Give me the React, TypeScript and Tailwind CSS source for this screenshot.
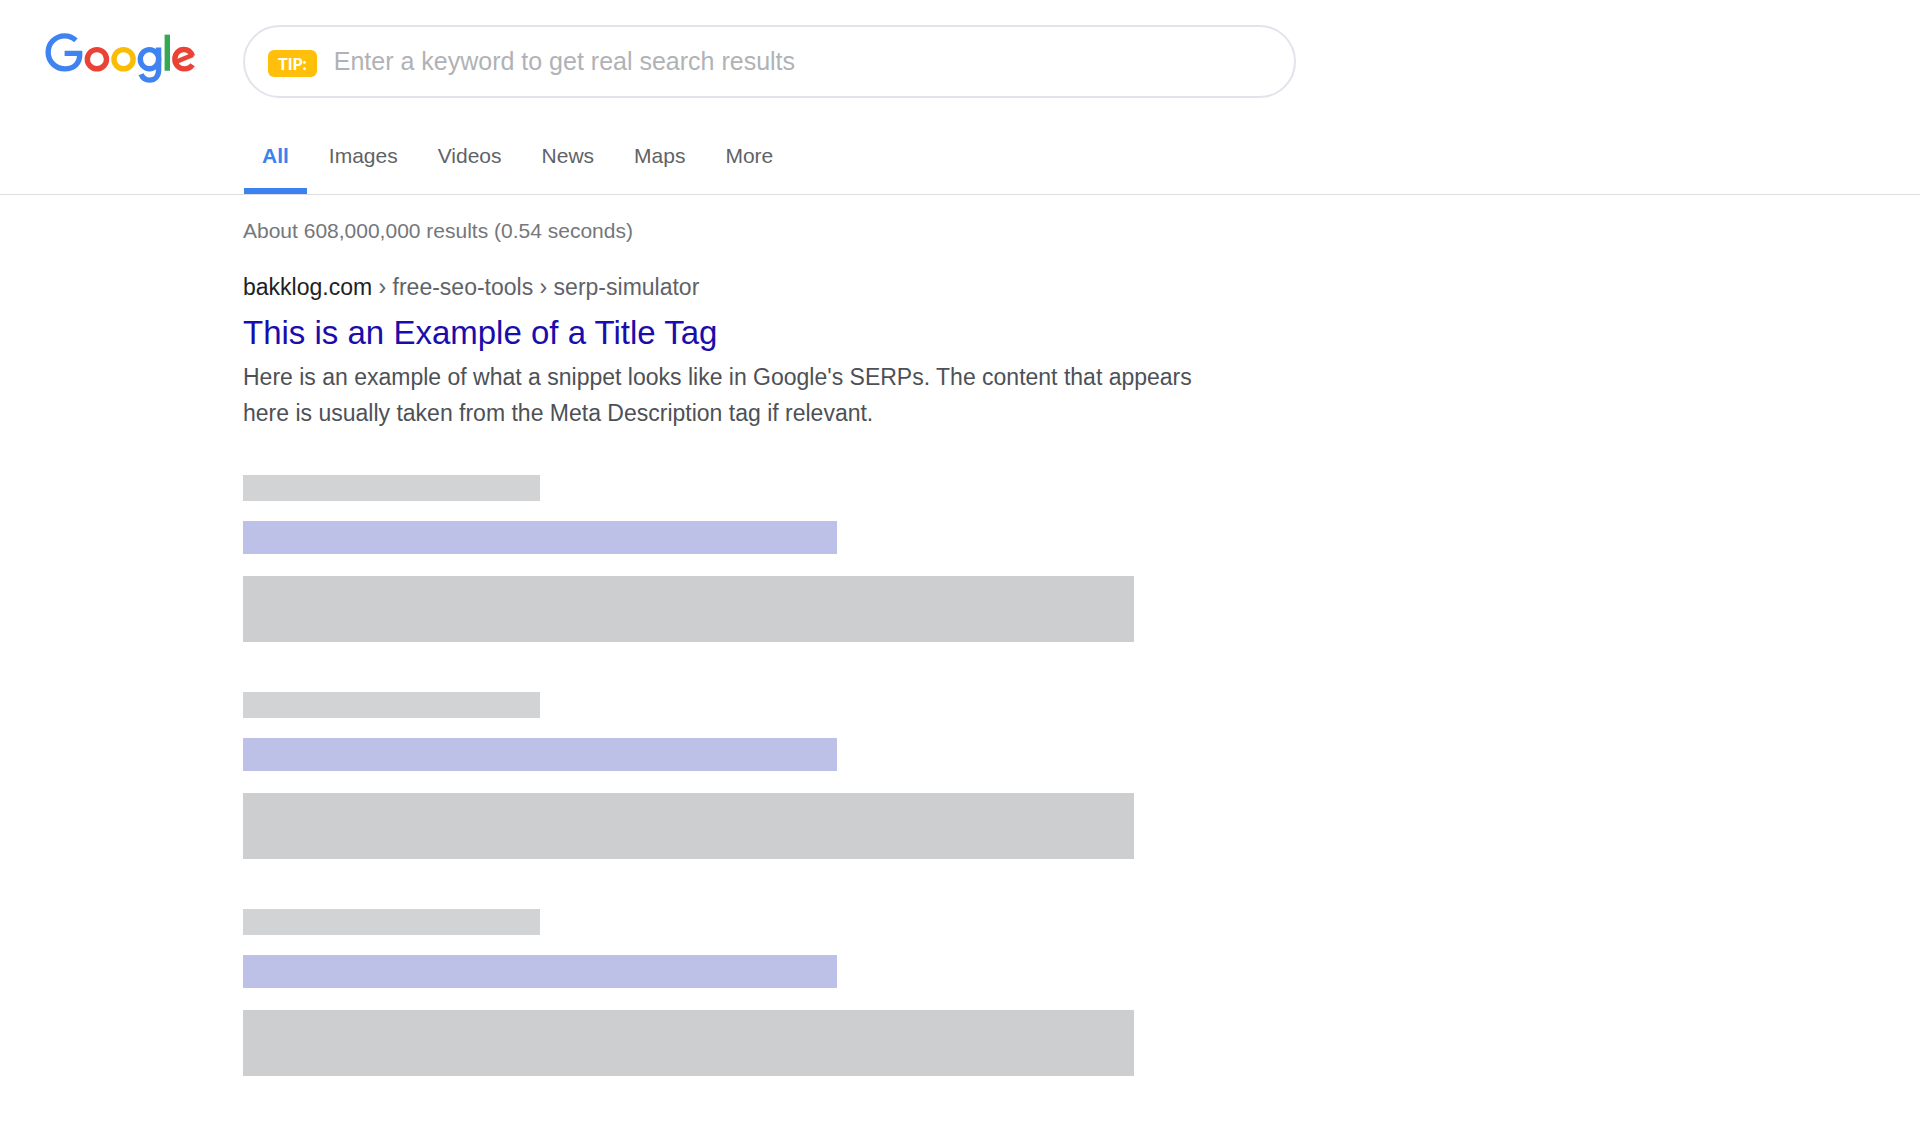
const tabs = ["All", "Images", "Videos", "News", "Maps", "More"];
const placeholders = [1, 2, 3];

function GoogleLogo() {
  return (
    <svg viewBox="0 0 272 92" className="w-[151px]" role="img" aria-label="Google" fill="none" strokeWidth="9.7">
      <path
        stroke="#3f83f0"
        d="M55.6 13.3C49.9 8 43 5.2 35.3 5.2A29.7 29.7 0 0 0 35.3 64.6C52.5 64.6 63.4 54.5 62.5 36.7H35.3"
      />
      <circle stroke="#ea4335" cx="93.5" cy="47.2" r="17.3" />
      <circle stroke="#fbbc05" cx="141.5" cy="47.2" r="17.3" />
      <g stroke="#3f83f0">
        <ellipse cx="188.2" cy="47.2" rx="16.5" ry="17.3" />
        <path d="M204.7 26.3V66.2C204.7 78.5 198 84.9 188.4 84.9C181 84.9 175.3 80 173 74.4" />
      </g>
      <path stroke="#34a853" d="M220.3 3V68" />
      <g stroke="#ea4335">
        <path d="M265.8 57C262.6 61.8 258 64.6 251.1 64.6C241.5 64.6 233.9 57 233.9 47.2C233.9 36.6 241.5 29.8 250 29.8C257.5 29.8 263.3 34.8 265.7 41.8" />
        <path strokeWidth="8" d="M237 51.6L266.5 39.4" />
      </g>
    </svg>
  );
}

export default function App() {
  return (
    <div className="min-h-screen bg-white pb-16 font-['Liberation_Sans',Arial,sans-serif]">
      <header className="border-b border-[#dcdde0]">
        <div className="flex items-start pt-[25px]">
          <a href="#" className="w-[243px] shrink-0 pt-2 pl-[45px]">
            <GoogleLogo />
          </a>
          <label className="flex h-[73px] w-full max-w-[1053px] items-center gap-[17px] rounded-full border-2 border-[#e3e3ec] px-[23px]">
            <span className="mt-1 flex h-[27px] shrink-0 items-center rounded-md bg-[#ffbf0b] px-2.5 font-[Lato,sans-serif] text-base font-black text-white">
              TIP:
            </span>
            <input
              type="text"
              aria-label="Search keyword"
              placeholder="Enter a keyword to get real search results"
              className="min-w-0 flex-1 bg-transparent text-[25px] text-[#3c4043] outline-none placeholder:text-[#b0b2b5]"
            />
          </label>
        </div>
        <nav className="ml-[244px] flex gap-1 pt-7">
          {tabs.map((tab, i) => (
            <button
              key={tab}
              type="button"
              className={
                i === 0
                  ? "h-[68px] border-b-[6px] border-[#3b82f0] px-[18px] pt-1 pb-1.5 text-[21px] font-bold text-[#3b82f0]"
                  : "h-[68px] border-b-[6px] border-transparent px-[18px] pt-1 pb-1.5 text-[21px] text-[#5f6368]"
              }
            >
              {tab}
            </button>
          ))}
        </nav>
      </header>

      <main className="ml-[243px] max-w-[1188px]">
        <p className="pt-5 text-[21px] leading-8 text-[#74777b]">About 608,000,000 results (0.54 seconds)</p>

        <article className="pt-6">
          <p className="text-[23px] leading-8 text-[#5f6368]">
            <span className="text-[#202124]">bakklog.com</span> › free-seo-tools › serp-simulator
          </p>
          <h3 className="pt-2 text-[33px] leading-[44px] text-[#1a0dab]">
            <a href="#">This is an Example of a Title Tag</a>
          </h3>
          <p className="max-w-[972px] pt-1 text-[23px] leading-9 text-[#4d5156]">
            Here is an example of what a snippet looks like in Google's SERPs. The content that appears here is usually
            taken from the Meta Description tag if relevant.
          </p>
        </article>

        <div className="flex flex-col gap-[50px] pt-11">
          {placeholders.map((n) => (
            <div key={n}>
              <div className="h-[26px] w-1/4 bg-[#d2d3d5]" />
              <div className="mt-5 h-[33px] w-1/2 bg-[#bdc0e7]" />
              <div className="mt-[22px] h-[66px] w-3/4 bg-[#cdced0]" />
            </div>
          ))}
        </div>
      </main>
    </div>
  );
}
